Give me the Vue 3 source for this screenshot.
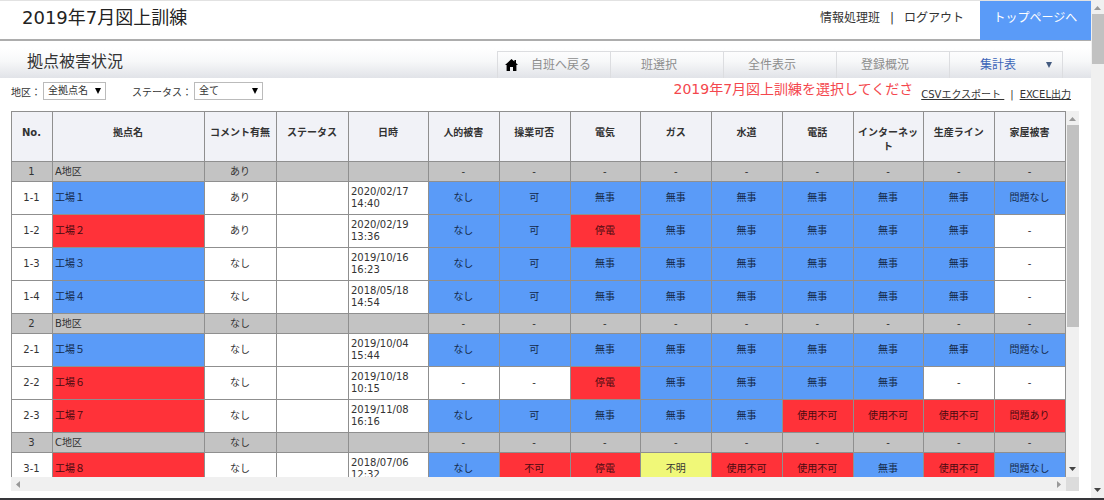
<script setup>
import { ref } from 'vue'

const area = ref('全拠点名')
const status = ref('全て')

const tabs = ['自班へ戻る', '班選択', '全件表示', '登録概況', '集計表']

const headers = [
  'No.', '拠点名', 'コメント有無', 'ステータス', '日時', '人的被害', '操業可否',
  '電気', 'ガス', '水道', '電話', 'インターネット', '生産ライン', '家屋被害',
]

const none = Array(9).fill('-')

const rows = [
  { no: '1', name: 'A地区', comment: 'あり', group: true, cells: none },
  { no: '1-1', name: '工場１', comment: 'あり', date: '2020/02/17', time: '14:40', cells: ['なし', '可', '無事', '無事', '無事', '無事', '無事', '無事', '問題なし'] },
  { no: '1-2', name: '工場２', comment: 'あり', bad: true, date: '2020/02/19', time: '13:36', cells: ['なし', '可', '停電', '無事', '無事', '無事', '無事', '無事', '-'] },
  { no: '1-3', name: '工場３', comment: 'なし', date: '2019/10/16', time: '16:23', cells: ['なし', '可', '無事', '無事', '無事', '無事', '無事', '無事', '-'] },
  { no: '1-4', name: '工場４', comment: 'なし', date: '2018/05/18', time: '14:54', cells: ['なし', '可', '無事', '無事', '無事', '無事', '無事', '無事', '-'] },
  { no: '2', name: 'B地区', comment: 'なし', group: true, cells: none },
  { no: '2-1', name: '工場５', comment: 'なし', date: '2019/10/04', time: '15:44', cells: ['なし', '可', '無事', '無事', '無事', '無事', '無事', '無事', '問題なし'] },
  { no: '2-2', name: '工場６', comment: 'なし', bad: true, date: '2019/10/18', time: '10:15', cells: ['-', '-', '停電', '無事', '無事', '無事', '無事', '-', '-'] },
  { no: '2-3', name: '工場７', comment: 'なし', bad: true, date: '2019/11/08', time: '16:16', cells: ['なし', '可', '無事', '無事', '無事', '使用不可', '使用不可', '使用不可', '問題あり'] },
  { no: '3', name: 'C地区', comment: 'なし', group: true, cells: none },
  { no: '3-1', name: '工場８', comment: 'なし', bad: true, date: '2018/07/06', time: '12:32', cells: ['なし', '不可', '停電', '不明', '使用不可', '使用不可', '無事', '使用不可', '問題なし'] },
]

function tone(value) {
  if (value === '-') return ''
  if (value === '不明') return 'unknown'
  return ['停電', '不可', '使用不可', '問題あり'].includes(value) ? 'bad' : 'good'
}
</script>

<template>
  <div class="window">
    <div class="page">
      <header class="top">
        <h1>2019年7月図上訓練</h1>
        <div class="account">
          <span>情報処理班</span><span>|</span><a href="#">ログアウト</a>
        </div>
        <a class="home" href="#">トップページへ</a>
      </header>

      <div class="bar">
        <h2>拠点被害状況</h2>
        <nav>
          <a v-for="(tab, i) in tabs" :key="tab" href="#" :class="{ first: i === 0, current: i === 4 }">
            <svg v-if="i === 0" width="13" height="12" viewBox="0 0 13 12" aria-hidden="true">
              <path d="M6.5 0 L0 6 H1.6 V12 H5 V8 H8 V12 H11.4 V6 H13 L11 4.1 V1 H9.4 V2.6 Z" />
            </svg>
            <span>{{ tab }}</span>
            <svg v-if="i === 4" width="6" height="6" viewBox="0 0 6 6" aria-hidden="true">
              <path d="M0 0 H6 L3 6 Z" />
            </svg>
          </a>
        </nav>
      </div>

      <div class="filters">
        <div class="field">
          <label for="area">地区：</label>
          <span class="pick area">
            <select id="area" v-model="area"><option>全拠点名</option></select>
            <svg width="6" height="6" viewBox="0 0 6 6" aria-hidden="true"><path d="M0 0 H6 L3 6 Z" /></svg>
          </span>
        </div>
        <div class="field">
          <label for="status">ステータス：</label>
          <span class="pick status">
            <select id="status" v-model="status"><option>全て</option></select>
            <svg width="6" height="6" viewBox="0 0 6 6" aria-hidden="true"><path d="M0 0 H6 L3 6 Z" /></svg>
          </span>
        </div>
        <p class="notice">2019年7月図上訓練を選択してくださ</p>
        <div class="export">
          <a href="#">CSVエクスポート&nbsp;</a><span>|</span><a href="#">EXCEL出力</a>
        </div>
      </div>

      <div class="sheet">
        <div class="view">
          <table>
            <colgroup>
              <col class="c-no"><col class="c-name"><col class="c-mid"><col class="c-mid"><col class="c-date">
              <col v-for="n in 9" :key="n">
            </colgroup>
            <thead>
              <tr><th v-for="h in headers" :key="h" scope="col">{{ h }}</th></tr>
            </thead>
            <tbody>
              <tr v-for="r in rows" :key="r.no" :class="{ group: r.group }">
                <td>{{ r.no }}</td>
                <td class="name" :class="r.group ? '' : r.bad ? 'bad' : 'good'">{{ r.name }}</td>
                <td>{{ r.comment }}</td>
                <td></td>
                <td class="date"><template v-if="r.date">{{ r.date }}<br>{{ r.time }}</template></td>
                <td v-for="(c, i) in r.cells" :key="i" :class="tone(c)">{{ c }}</td>
              </tr>
            </tbody>
          </table>
        </div>
        <div class="track vertical" aria-hidden="true">
          <svg width="7" height="4" viewBox="0 0 7 4"><path class="dim" d="M0 4 H7 L3.5 0 Z" /></svg>
          <div class="thumb"></div>
          <svg width="7" height="4" viewBox="0 0 7 4"><path d="M0 0 H7 L3.5 4 Z" /></svg>
        </div>
        <div class="track horizontal" aria-hidden="true">
          <svg width="4" height="7" viewBox="0 0 4 7"><path class="dim" d="M4 0 V7 L0 3.5 Z" /></svg>
          <svg width="4" height="7" viewBox="0 0 4 7"><path class="dim" d="M0 0 V7 L4 3.5 Z" /></svg>
        </div>
        <div class="corner"></div>
      </div>
    </div>
    <div class="track vertical outer" aria-hidden="true">
      <svg width="7" height="4" viewBox="0 0 7 4"><path class="dim" d="M0 4 H7 L3.5 0 Z" /></svg>
      <div class="thumb"></div>
      <svg width="7" height="4" viewBox="0 0 7 4"><path d="M0 0 H7 L3.5 4 Z" /></svg>
    </div>
  </div>
</template>

<style>
body {
  background: #fff;
}
</style>

<style scoped>
.window {
  box-sizing: border-box;
  height: 100vh;
  display: grid;
  grid-template-columns: minmax(0, 1fr) 13px;
  border-bottom: 2px solid #36363a;
  font-family: "DejaVu Sans", "Noto Sans CJK JP", sans-serif;
  font-size: 10px;
  color: #333;
}
.page {
  display: flex;
  flex-direction: column;
  min-height: 0;
  border-top: 1px solid #e2e2e2;
}
a {
  color: inherit;
  text-decoration: none;
}
h1, h2, p {
  margin: 0;
  font-weight: 400;
}
.top {
  display: flex;
  height: 40px;
  box-sizing: border-box;
  border-bottom: 2px solid #adadad;
  line-height: 34px;
}
h1 {
  padding-left: 22px;
  font-size: 18px;
  color: #222;
  flex: 1;
}
.account {
  display: flex;
  gap: 10px;
  padding-right: 16px;
  font-size: 12px;
}
.home {
  width: 111px;
  height: 39px;
  background: #5a9bf8;
  color: #fff;
  font-size: 12px;
  text-align: center;
}
.bar {
  display: flex;
  justify-content: space-between;
  align-items: flex-end;
  height: 37px;
  padding: 0 28px 0 27px;
  background: linear-gradient(#fff 20%, #f7f8f9 55%, #e1e3e8);
}
h2 {
  font-size: 16px;
  line-height: 32px;
}
nav {
  display: flex;
  border-left: 1px solid #dcdde0;
}
nav a {
  display: flex;
  align-items: center;
  justify-content: center;
  box-sizing: border-box;
  width: 113px;
  height: 27px;
  padding-right: 16px;
  border-top: 1px solid #dcdde0;
  border-right: 1px solid #dcdde0;
  font-size: 12px;
  line-height: 26px;
  color: #8e8e8e;
}
nav .first {
  justify-content: space-between;
  padding: 0 19px 0 7px;
}
nav .first svg {
  fill: #000;
}
nav .current {
  justify-content: space-between;
  padding: 0 10px 0 30px;
  color: #3d65b8;
}
nav .current svg {
  fill: #445b80;
}
.filters {
  display: flex;
  align-items: flex-start;
  height: 33px;
  padding: 0 20px 0 11px;
}
.field {
  display: flex;
  align-items: center;
  padding-top: 4px;
  margin-right: 26px;
}
.field label {
  padding-right: 2px;
}
.pick {
  position: relative;
  display: flex;
}
.pick svg {
  position: absolute;
  right: 5px;
  top: 6px;
  pointer-events: none;
}
.pick select {
  appearance: none;
  box-sizing: border-box;
  width: 100%;
  height: 18px;
  padding: 0 4px;
  border: 1px solid #bbb;
  border-radius: 0;
  background: #fff;
  font: inherit;
  line-height: 16px;
  color: #333;
}
.pick.area {
  width: 63px;
}
.pick.status {
  width: 69px;
}
.notice {
  flex: 1;
  padding-right: 8px;
  font-size: 14px;
  line-height: 22px;
  color: #f4474d;
  text-align: right;
  white-space: nowrap;
}
.export {
  display: flex;
  gap: 6px;
  line-height: 34px;
  white-space: nowrap;
}
.export a {
  text-decoration: underline;
}
.sheet {
  flex: 1;
  min-height: 0;
  display: grid;
  grid-template-columns: minmax(0, 1fr) 13px;
  grid-template-rows: minmax(0, 1fr) 14px;
  margin: 0 12px 7px 11px;
}
.view {
  overflow: hidden;
}
table {
  width: 100%;
  table-layout: fixed;
  border-collapse: collapse;
}
.c-no {
  width: 41px;
}
.c-name {
  width: 152px;
}
.c-mid {
  width: 72px;
}
.c-date {
  width: 80px;
}
th, td {
  box-sizing: border-box;
  padding: 0 3px 0 2px;
  border: 1px solid #8f8f8f;
  text-align: center;
  line-height: 12px;
}
th {
  height: 50px;
  padding: 14px 2px 0 1px;
  background: #f1f2f7;
  line-height: 14px;
  vertical-align: top;
}
td {
  height: 33px;
}
.group td {
  height: 20px;
  background: #c3c3c3;
}
td.name, td.date {
  text-align: left;
}
.good {
  background: #5a9bf8;
  color: #14294a;
}
.bad {
  background: #ff3239;
  color: #4a0a10;
}
.unknown {
  background: #f0f878;
}
.track {
  display: flex;
  align-items: center;
  background: #f0f0f0;
}
.track svg {
  flex: none;
  fill: #444;
}
.track .dim {
  fill: #999;
}
.vertical {
  flex-direction: column;
  padding: 6px 0;
}
.vertical .thumb {
  width: 12px;
  height: 202px;
  margin: 4px 0 auto;
  background: #c1c1c1;
}
.outer .thumb {
  height: 50px;
}
.horizontal {
  justify-content: space-between;
  padding: 0 5px;
}
.corner {
  background: #dcdcdc;
}
</style>
